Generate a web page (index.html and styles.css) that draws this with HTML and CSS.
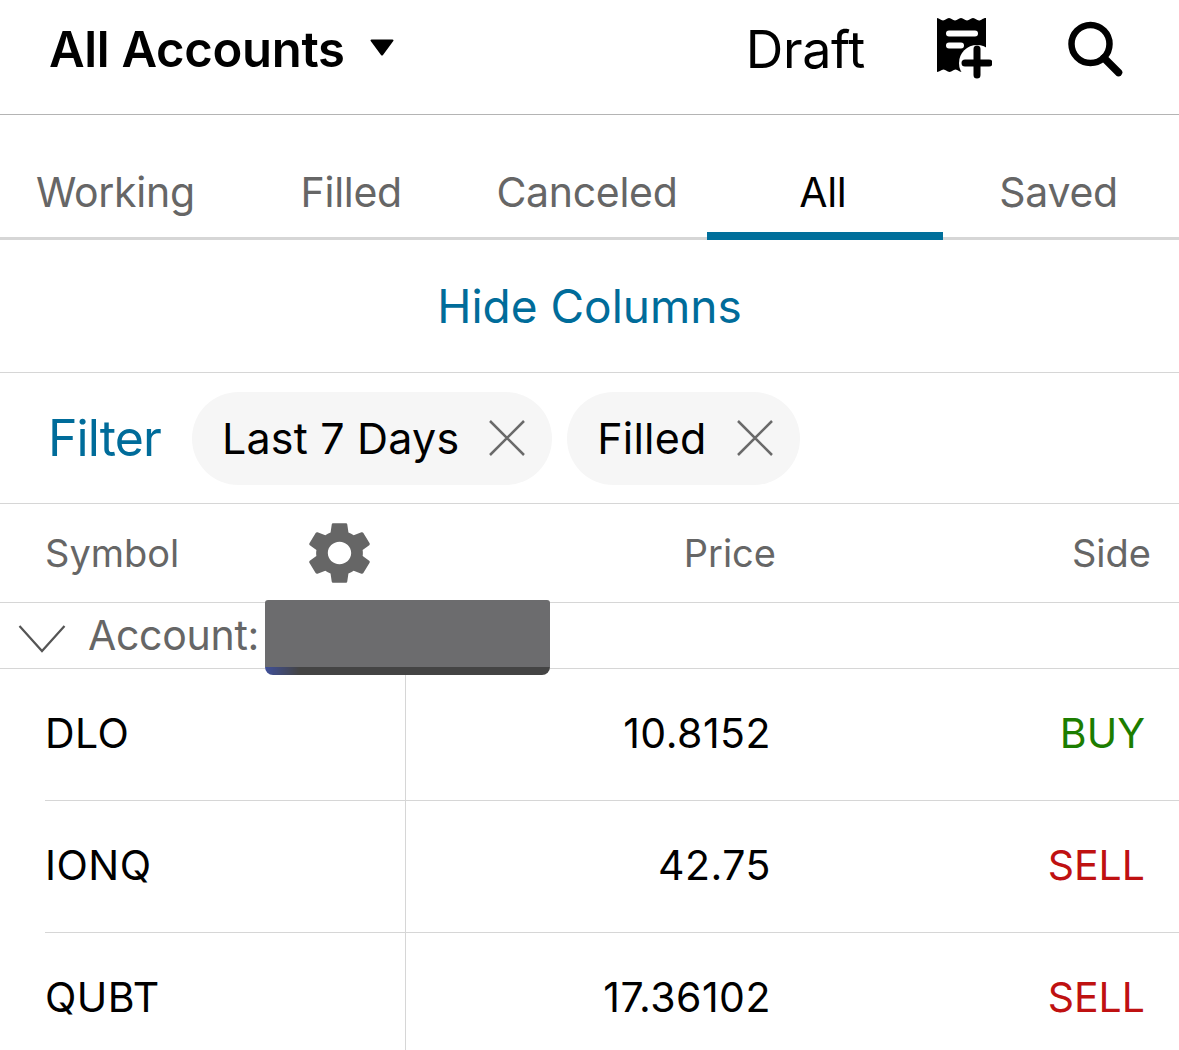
FILE: index.html
```html
<!DOCTYPE html>
<html lang="en">
<head>
<meta charset="utf-8">
<title>Orders</title>
<link rel="stylesheet" href="styles.css">
</head>
<body>
<div class="app">
  <header class="topbar">
    <div class="accounts"><span>All Accounts</span>
      <svg class="caret" width="26" height="20" viewBox="0 0 26 20"><path d="M2.500 1.500h21a1 1 0 0 1 .8 1.600L14 17a1.300 1.300 0 0 1-2 0L1.700 3.100a1 1 0 0 1 .8-1.600z" fill="#000"/></svg>
    </div>
    <div class="actions">
      <span class="draft">Draft</span>
      <svg class="receipt" width="56" height="62" viewBox="0 0 56 62">
        <path fill="#000" d="M1 1c2.500 0 3.500 2.500 6 2.500S10.500 1 13 1s3.500 2.500 6 2.500S22.500 1 25 1s3.500 2.500 6 2.500S34.500 1 37 1s3.500 2.500 6 2.500S46.500 1 50 1v54c-3 0-4-2.500-6.500-2.500S40 55 37.500 55 34 52.500 31.500 52.500 28 55 25.500 55 22 52.500 19.500 52.500 16 55 13.500 55 10 52.500 7.500 52.500 4 55 1 55z"/>
        <rect x="10" y="13.500" width="32" height="6" rx="3" fill="#fff"/>
        <rect x="10" y="25.500" width="18" height="6" rx="3" fill="#fff"/>
        <circle cx="41" cy="46" r="18" fill="#fff"/>
        <path d="M41 32v26M29 46h24" stroke="#000" stroke-width="7" stroke-linecap="round" fill="none"/>
      </svg>
      <svg class="search" width="56" height="56" viewBox="0 0 56 56"><circle cx="23.500" cy="23" r="19" fill="none" stroke="#000" stroke-width="6.500"/><path d="M37 37l14.500 14.500" stroke="#000" stroke-width="7.500" stroke-linecap="round"/></svg>
    </div>
  </header>

  <nav class="tabs">
    <a class="tab">Working</a>
    <a class="tab">Filled</a>
    <a class="tab">Canceled</a>
    <a class="tab tab-active">All</a>
    <a class="tab">Saved</a>
  </nav>

  <div class="hide-row"><a class="link hide-link">Hide Columns</a></div>

  <div class="filter-row">
    <a class="link filter-link">Filter</a>
    <span class="chip">Last 7 Days
      <svg class="chip-x" width="38" height="38" viewBox="0 0 38 38"><path d="M2 2l34 34M36 2L2 36" stroke="#6a6a6a" stroke-width="2.500" fill="none"/></svg>
    </span>
    <span class="chip">Filled
      <svg class="chip-x" width="38" height="38" viewBox="0 0 38 38"><path d="M2 2l34 34M36 2L2 36" stroke="#6a6a6a" stroke-width="2.500" fill="none"/></svg>
    </span>
  </div>

  <div class="col-head">
    <div class="col-symbol">Symbol
      <svg class="gear" width="61" height="62" viewBox="2.600 2 18.800 20" preserveAspectRatio="none"><path fill="#666" d="M19.140 12.940c.04-.3.06-.61.06-.94 0-.32-.02-.64-.07-.94l2.030-1.580c.18-.14.23-.41.12-.61l-1.920-3.320c-.12-.22-.37-.29-.59-.22l-2.390.96c-.5-.38-1.030-.7-1.620-.94l-.36-2.540c-.04-.24-.24-.41-.48-.41h-3.840c-.24 0-.43.17-.47.41l-.36 2.540c-.59.24-1.130.57-1.620.94l-2.390-.96c-.22-.08-.47 0-.59.22L2.740 8.870c-.12.21-.08.47.12.61l2.030 1.580c-.05.3-.09.63-.09.94s.02.64.07.94l-2.030 1.580c-.18.14-.23.41-.12.61l1.920 3.320c.12.22.37.29.59.22l2.390-.96c.5.38 1.030.7 1.620.94l.36 2.540c.05.24.24.41.48.41h3.840c.24 0 .44-.17.47-.41l.36-2.540c.59-.24 1.130-.56 1.620-.94l2.390.96c.22.08.47 0 .59-.22l1.920-3.320c.12-.22.07-.47-.12-.61l-2.010-1.580zM12 15.600c-1.980 0-3.600-1.620-3.600-3.600s1.620-3.600 3.600-3.600 3.600 1.620 3.600 3.600-1.620 3.600-3.600 3.600z"/></svg>
    </div>
    <div class="col-price">Price</div>
    <div class="col-side">Side</div>
  </div>

  <div class="account-row">
    <svg class="chevron" width="48" height="30" viewBox="0 0 48 30"><path d="M1.500 2L24 27 46.500 2" stroke="#555" stroke-width="2.200" fill="none"/></svg>
    <span class="account-label">Account:</span>
  </div>

  <div class="rows">
    <div class="row"><div class="cell-symbol">DLO</div><div class="cell-rest"><span class="cell-price">10.8152</span><span class="cell-side buy">BUY</span></div></div>
    <div class="row"><div class="cell-symbol">IONQ</div><div class="cell-rest"><span class="cell-price">42.75</span><span class="cell-side sell">SELL</span></div></div>
    <div class="row"><div class="cell-symbol">QUBT</div><div class="cell-rest"><span class="cell-price">17.36102</span><span class="cell-side sell">SELL</span></div></div>
  </div>

  <div class="redaction"></div>
</div>
</body>
</html>
```
FILE: styles.css
```css
* { box-sizing: border-box; }
html, body { margin: 0; padding: 0; background: #fff; }
body { font-family: Inter, "Liberation Sans", sans-serif; color: #000; overflow: hidden; }
.app { position: relative; width: 1179px; height: 1050px; overflow: hidden; }

.topbar { height: 115px; border-bottom: 1px solid #b4b4b4; display: flex; justify-content: space-between; align-items: center; padding: 0 56px 16px 49px; }
.accounts { display: flex; align-items: center; gap: 24px; font-size: 49px; font-weight: 600; letter-spacing: -0.3px; }
.caret { margin-top: -2px; }
.actions { display: flex; align-items: center; }
.draft { font-size: 52px; letter-spacing: -0.3px; margin-right: 71px; }
.receipt { margin-right: 75px; margin-top: -2px; }
.search { margin-top: -1px; }

.tabs { height: 125px; display: grid; grid-template-columns: repeat(5, 1fr); border-bottom: 3px solid #d6d6d6; }
.tab { display: flex; align-items: center; justify-content: center; height: 125px; padding: 58px 5px 30px 0; font-size: 41px; color: #666; letter-spacing: -0.3px; }
.tab-active { color: #000; border-bottom: 8px solid #006f9b; padding-bottom: 22px; }

.link { color: #006c9a; }
.hide-row { height: 133px; display: flex; align-items: center; justify-content: center; border-bottom: 1px solid #d6d6d6; }
.hide-link { font-size: 46px; letter-spacing: 0; }

.filter-row { height: 131px; border-bottom: 1px solid #d6d6d6; display: flex; align-items: center; padding-left: 48px; gap: 15px; }
.filter-link { font-size: 50px; letter-spacing: -0.9px; margin-right: 16px; }
.chip { height: 93px; border-radius: 47px; background: #f6f6f6; display: flex; align-items: center; gap: 29px; padding: 0 26px 0 30px; font-size: 43px; letter-spacing: 0.2px; }

.col-head { height: 99px; border-bottom: 1px solid #d6d6d6; display: grid; grid-template-columns: 405px 371px 1fr; align-items: center; font-size: 38px; color: #666; }
.col-symbol { padding-left: 45px; display: flex; align-items: center; position: relative; }
.gear { position: absolute; left: 309px; top: -8px; }
.col-price { text-align: right; }
.col-side { text-align: right; padding-right: 28px; }

.account-row { height: 66px; border-bottom: 1px solid #d6d6d6; display: flex; align-items: center; padding-left: 18px; gap: 22px; font-size: 41px; color: #666; letter-spacing: -0.3px; }
.account-label { margin-top: -2px; }
.chevron { margin-top: 6px; }

.row { height: 132px; margin-left: 45px; border-bottom: 1px solid #d6d6d6; display: flex; font-size: 41px; }
.cell-symbol { width: 361px; border-right: 1px solid #d6d6d6; display: flex; align-items: center; padding-bottom: 4px; letter-spacing: 0.5px; }
.cell-rest { flex: 1; display: flex; align-items: center; justify-content: flex-end; position: relative; padding: 0 34px 4px 0; }
.cell-price { position: absolute; right: 408px; letter-spacing: 0.5px; }
.buy { color: #1c7d00; }
.sell { color: #bf1111; }

.redaction { position: absolute; left: 265px; top: 600px; width: 285px; height: 75px; background: linear-gradient(to right, #3f4f9a 0, transparent 12%) bottom / 100% 8px no-repeat, linear-gradient(to bottom, #6c6c6e 0, #6c6c6e 90%, #444 90%, #444 100%); border-radius: 3px 3px 8px 8px; }
```
